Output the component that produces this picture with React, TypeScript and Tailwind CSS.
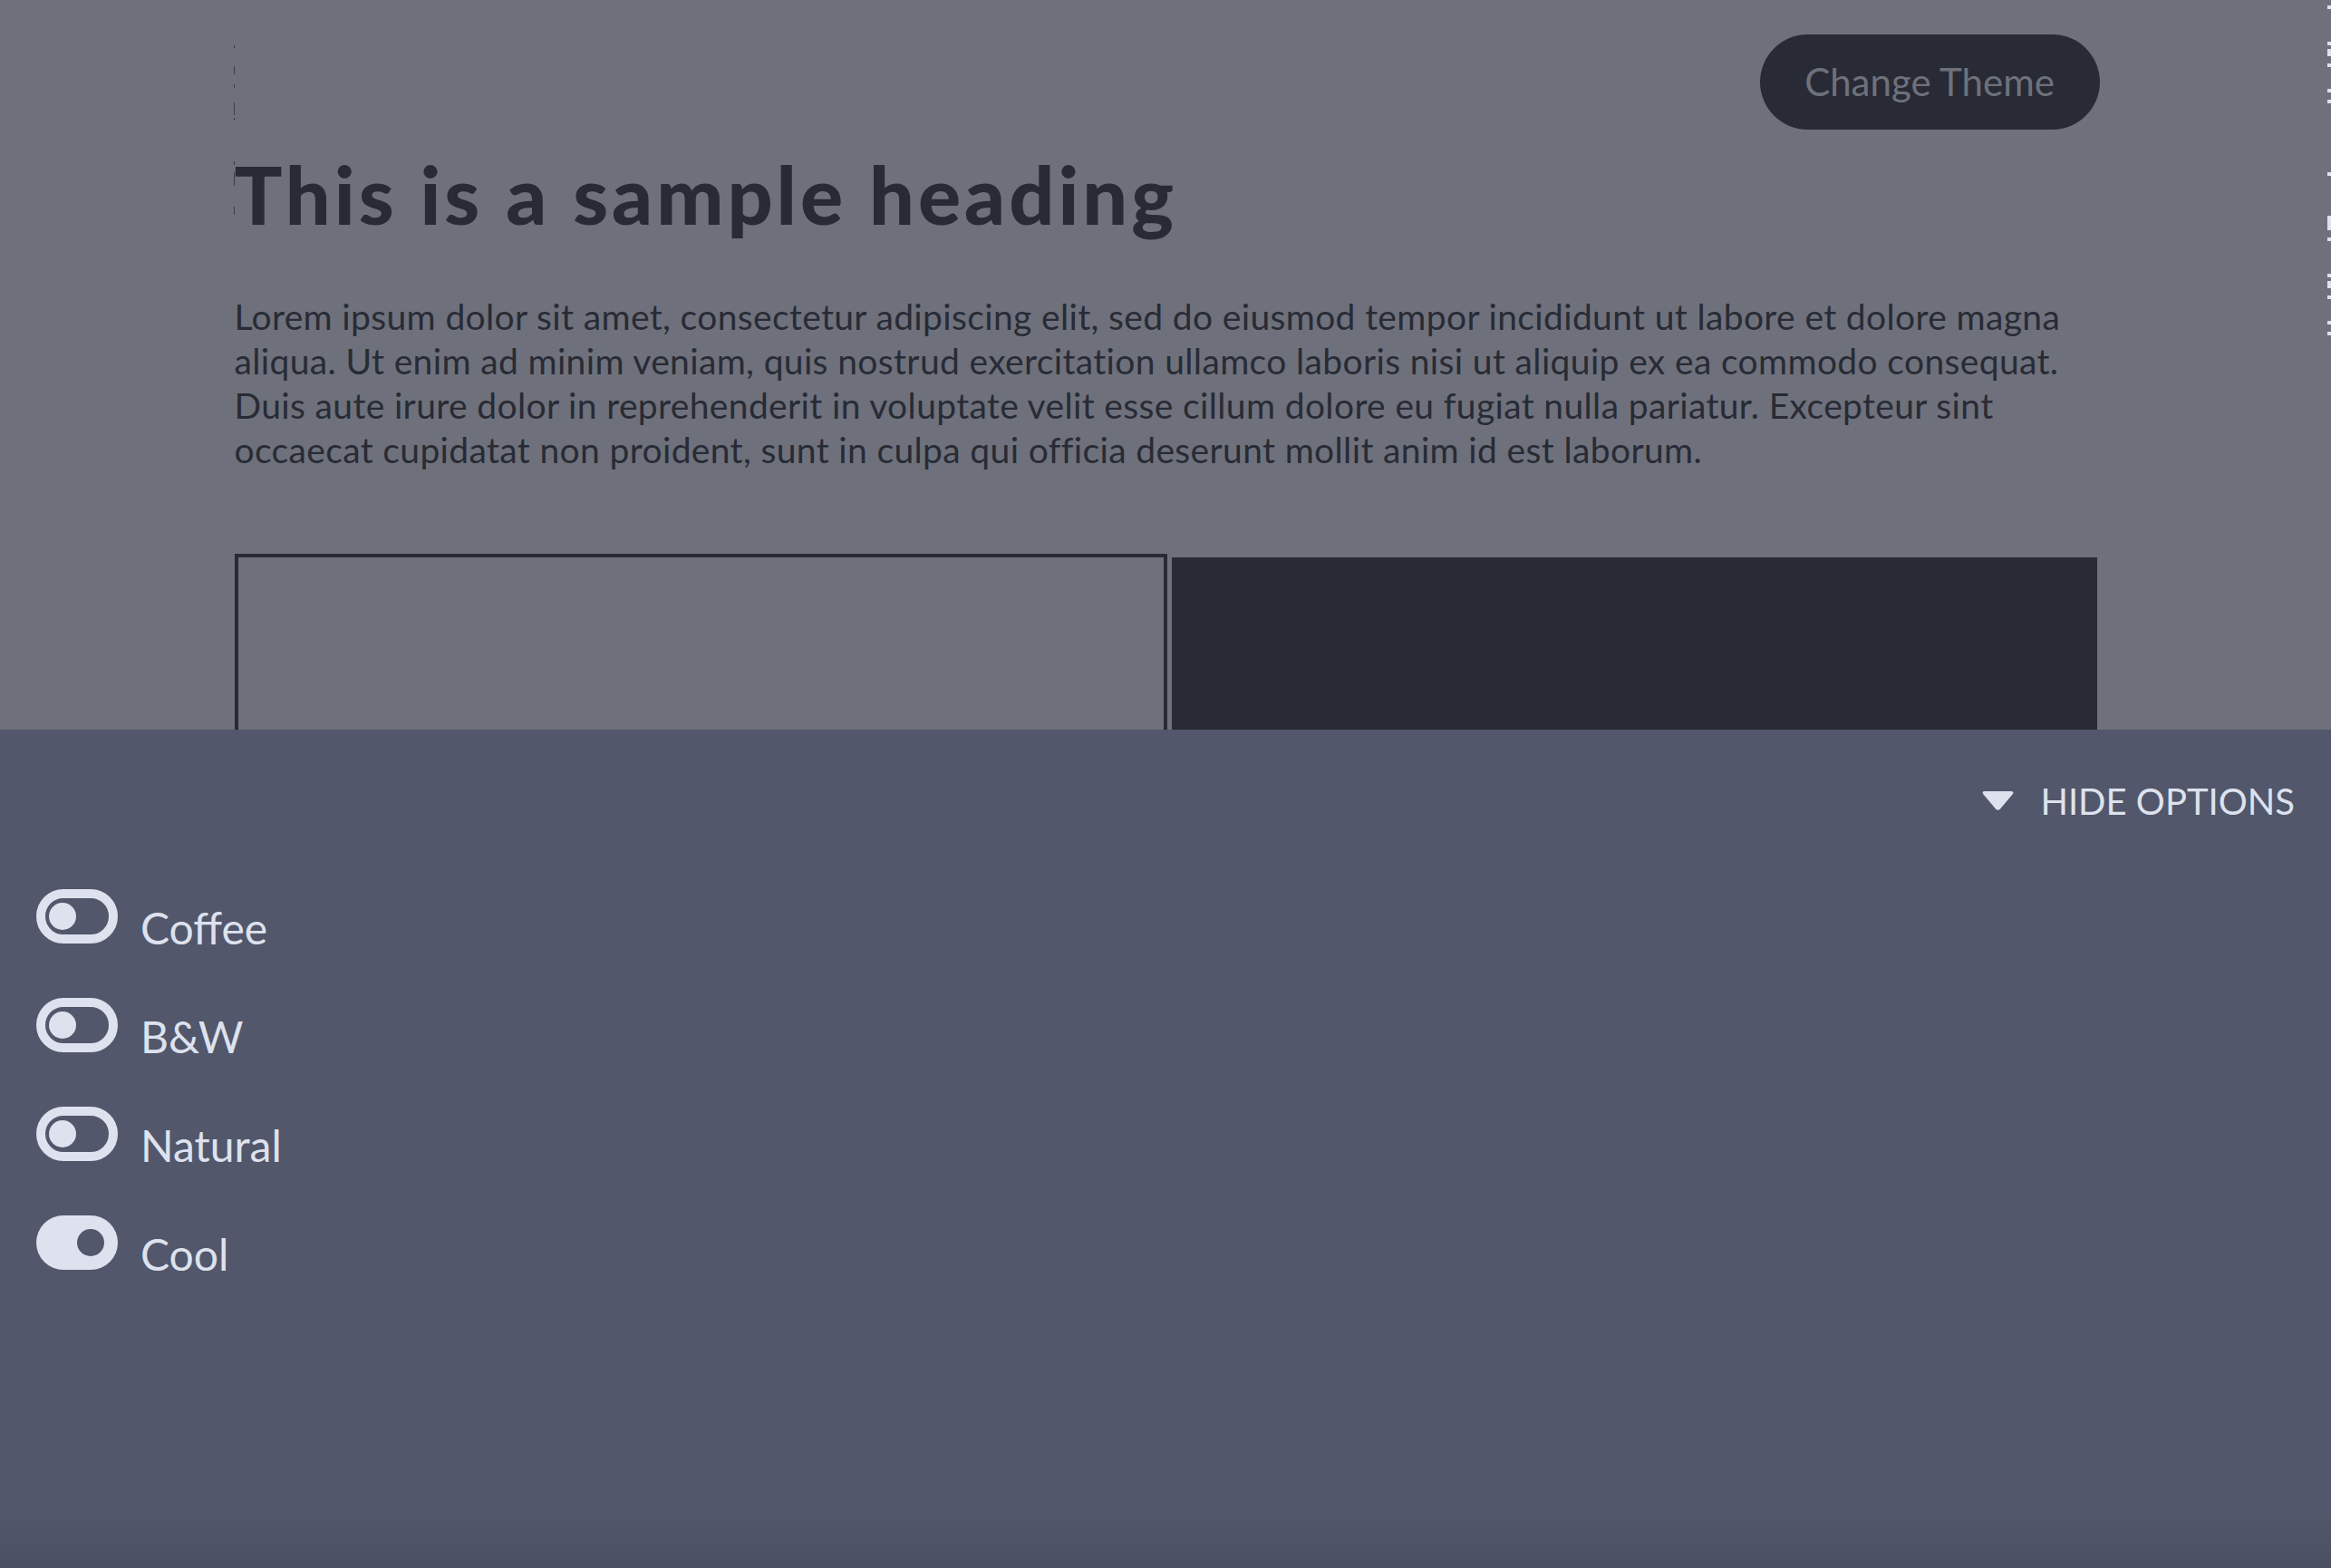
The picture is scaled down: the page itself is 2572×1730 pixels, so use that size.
import React from "react";

const options = [
  { label: "Coffee", on: false },
  { label: "B&W", on: false },
  { label: "Natural", on: false },
  { label: "Cool", on: true },
];

// little marks hugging the right edge of the page
const edgeMarks = [
  [6, 4], [46, 4], [54, 8], [70, 4], [98, 4], [110, 4], [190, 4],
  [238, 16], [262, 4], [302, 4], [310, 8], [326, 4], [354, 4], [366, 4],
];

// faint caret marks left of the heading
const caretMarks = [
  [0, 3], [23, 9], [43, 4], [63, 14], [80, 3], [128, 4], [140, 15], [178, 9],
];

function Toggle({ on }: { on: boolean }) {
  if (on) {
    return (
      <div className="flex h-[60px] w-[90px] shrink-0 items-center justify-end rounded-full bg-[#dde2ee] pr-[15px]">
        <div className="h-[30px] w-[30px] rounded-full bg-[#52576b]" />
      </div>
    );
  }
  return (
    <div className="flex h-[60px] w-[90px] shrink-0 items-center rounded-full border-[10px] border-[#dde2ee] pl-[4px]">
      <div className="h-[30px] w-[30px] rounded-full bg-[#dde2ee]" />
    </div>
  );
}

export default function App() {
  return (
    <div className="relative h-[1730px] overflow-hidden bg-[#6e717b] font-['Lato',sans-serif]">
      <svg className="absolute right-0 top-0" width="4" height="372">
        {edgeMarks.map(([y, h]) => (
          <rect key={y} x="0" y={y} width="4" height={h} fill="#dde2ee" />
        ))}
      </svg>

      <div className="relative mx-auto w-[2055px] pt-[38px]">
        <svg className="absolute left-[-1px] top-[50px]" width="2" height="190">
          {caretMarks.map(([y, h]) => (
            <rect key={y} x="0" y={y} width="1" height={h} fill="#3a3d47" />
          ))}
        </svg>

        <div className="flex justify-end">
          <button className="mr-[-3px] h-[105px] w-[375px] rounded-full bg-[#282b35] text-[42px] text-[#6e717b]">
            Change Theme
          </button>
        </div>

        <h1 className="mt-[27px] text-[88px] font-black leading-none tracking-[4px] text-[#282b35]">
          This is a sample heading
        </h1>

        <p className="mt-[67px] text-[39px] leading-[49px] tracking-[0.35px] text-[#282b35]">
          Lorem ipsum dolor sit amet, consectetur adipiscing elit, sed do eiusmod tempor incididunt ut labore et dolore magna
          <br />
          aliqua. Ut enim ad minim veniam, quis nostrud exercitation ullamco laboris nisi ut aliquip ex ea commodo consequat.
          <br />
          Duis aute irure dolor in reprehenderit in voluptate velit esse cillum dolore eu fugiat nulla pariatur. Excepteur sint
          <br />
          occaecat cupidatat non proident, sunt in culpa qui officia deserunt mollit anim id est laborum.
        </p>

        <div className="mt-[90px] flex items-center gap-[5px]">
          <div className="h-[400px] w-[1029px] border-4 border-[#282b35]" />
          <div className="h-[392px] flex-1 bg-[#282b35]" />
        </div>
      </div>

      {/* options drawer */}
      <div className="fixed inset-x-0 bottom-0 h-[925px] bg-[linear-gradient(to_bottom,#52576b_93%,#4a4f61_100%)]">
        <div className="flex items-center justify-end gap-[28px] pr-[40px] pt-[59px]">
          <svg width="37" height="22" viewBox="0 0 37 22">
            <path
              d="M4 0 H33 Q37 0 34.5 3.5 L21 19.5 Q18.5 22 16 19.5 L2.5 3.5 Q0 0 4 0 Z"
              fill="#dde2ee"
            />
          </svg>
          <span className="text-[40px] leading-none text-[#dde2ee]">HIDE OPTIONS</span>
        </div>

        <div className="mt-[77px] flex flex-col gap-[60px] pl-[40px]">
          {options.map((o) => (
            <div key={o.label} className="flex h-[60px] items-start">
              <Toggle on={o.on} />
              <span className="ml-[25px] mt-[19px] text-[48px] leading-none text-[#dde2ee]">
                {o.label}
              </span>
            </div>
          ))}
        </div>
      </div>
    </div>
  );
}
